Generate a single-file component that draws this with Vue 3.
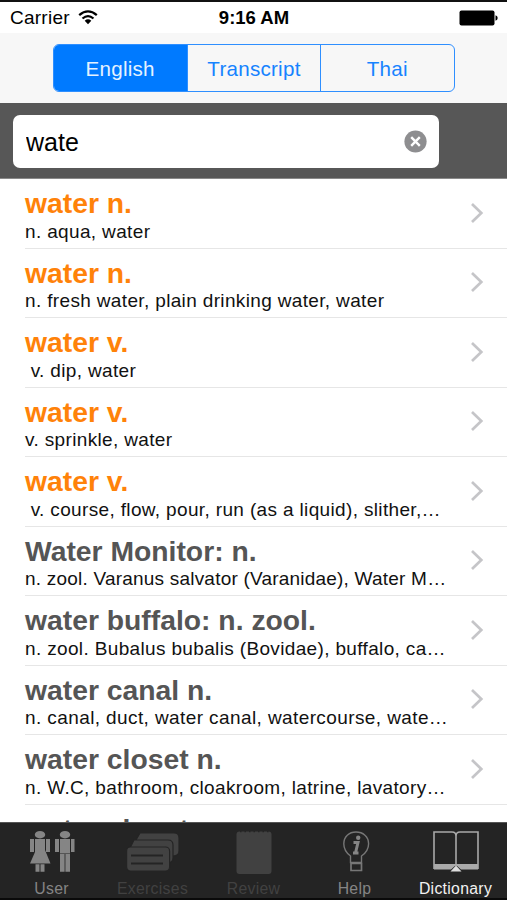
<script setup>
import { ref } from 'vue'

const languages = ['English', 'Transcript', 'Thai']
const active = ref('English')
const query = ref('wate')
const entries = [
  { title: 'water n.', text: 'n. aqua, water', exact: true },
  { title: 'water n.', text: 'n. fresh water, plain drinking water, water', exact: true },
  { title: 'water v.', text: ' v. dip, water', exact: true },
  { title: 'water v.', text: 'v. sprinkle, water', exact: true },
  { title: 'water v.', text: ' v. course, flow, pour, run (as a liquid), slither,…', exact: true },
  { title: 'Water Monitor: n.', text: 'n. zool. Varanus salvator (Varanidae), Water M…', fit: 'tight' },
  { title: 'water buffalo: n. zool.', text: 'n. zool. Bubalus bubalis (Bovidae), buffalo, ca…' },
  { title: 'water canal n.', text: 'n. canal, duct, water canal, watercourse, wate…', fit: 'loose' },
  { title: 'water closet n.', text: 'n. W.C, bathroom, cloakroom, latrine, lavatory…' },
  { title: 'water closet', text: '' },
]
</script>

<template>
  <div class="screen">
    <header class="status">
      <div class="carrier">
        <span>Carrier</span>
        <svg class="wifi" width="20" height="15" viewBox="0 0 20 15">
          <path d="M1.2 5.2Q10-2.4 18.8 5.2M4.5 8.5Q10 3.8 15.5 8.5" fill="none" stroke="#000" stroke-width="2.3" />
          <path d="M6.7 10.7Q10 8 13.3 10.7L10 14.2Z" fill="#000" />
        </svg>
      </div>
      <span class="time">9:16 AM</span>
      <svg class="battery" width="39" height="16" viewBox="0 0 39 16">
        <rect x="0.5" y="0.5" width="35" height="15" rx="2" fill="#000" />
        <path d="M36.5 5.2Q38.7 6 38.7 8T36.5 10.8Z" fill="#000" />
      </svg>
    </header>

    <nav class="segments-bar">
      <div class="segments">
        <button v-for="l in languages" :key="l" :class="{ on: l === active }" @click="active = l">{{ l }}</button>
      </div>
    </nav>

    <div class="search-bar">
      <div class="field">
        <input v-model="query" type="text" aria-label="Search" />
        <svg class="clear" width="23" height="23" viewBox="0 0 23 23" @click="query = ''">
          <circle cx="11.5" cy="11.5" r="11.1" fill="#8e8e90" />
          <path d="M7.2 7.2l8.6 8.6M15.8 7.2l-8.6 8.6" stroke="#fff" stroke-width="2.4" />
        </svg>
      </div>
    </div>

    <main class="list">
      <article v-for="(e, i) in entries" :key="i" class="row">
        <div class="copy">
          <h2 :class="{ exact: e.exact }">{{ e.title }}</h2>
          <p :class="e.fit">{{ e.text }}</p>
        </div>
        <svg class="chevron" width="14" height="22" viewBox="0 0 14 22">
          <path d="M2 2l9.3 9L2 20" fill="none" stroke="#c5c5c8" stroke-width="2.7" />
        </svg>
      </article>
    </main>

    <footer class="tabs">
      <div class="tab">
        <svg width="48" height="44" viewBox="2 0 48 44" fill="#858585">
          <ellipse cx="14" cy="3.7" rx="5.2" ry="3.7" />
          <path d="M9 8h10v11l5.500 13.500H4L9 21ZM4 8h4v13H4ZM20 8h4v13h-4ZM9.500 33.300h4v7.500h-4ZM14.500 33.300h4v7.500h-4Z" />
          <ellipse cx="39" cy="3.7" rx="5.2" ry="3.7" />
          <path d="M34 8h10v14.500H34ZM29 8h4v13h-4ZM45 8h3.500v13H45ZM34 23h4.600v17.800H34ZM39.400 23H44v17.800h-4.600Z" />
        </svg>
        <span>User</span>
      </div>
      <div class="tab disabled">
        <svg width="54" height="44" viewBox="0 0 54 44">
          <g fill="#424242" stroke="#242424" stroke-width="1.2">
            <path d="M14 2h34q5 0 5 5v13q0 5-6 5H17l-7-16Z" />
            <path d="M8 9h34q5 0 5 5v13q0 5-6 5H10L4 17Z" />
            <rect x="0.6" y="16" width="43" height="24" rx="4" />
          </g>
          <path d="M5 24.500h32M5 32.500h32" stroke="#242424" stroke-width="1.8" />
        </svg>
        <span>Exercises</span>
      </div>
      <div class="tab disabled">
        <svg width="36" height="44" viewBox="0 0 36 44">
          <rect x="0.5" y="0.5" width="35" height="42.500" rx="3" fill="#414141" />
          <path d="M4 0.500h30" stroke="#242424" stroke-width="1.5" stroke-dasharray="1.5 3" />
        </svg>
        <span>Review</span>
      </div>
      <div class="tab">
        <svg class="bulb" width="28" height="44" viewBox="0 0 28 44">
          <path d="M8.500 31.500V25Q1.800 20 1.800 12.700C1.800 5.500 7 1 14 1s12.600 4.500 12.600 11.700Q26.600 20 19.500 25v6.500Z" fill="none" stroke="#777" stroke-width="1.4" />
          <path d="M9 32.500h10.500v7H9Z" fill="none" stroke="#777" stroke-width="1.700" />
          <path d="M11.500 11.500h4.500l-2.500 10.500h3M11 22h4" fill="none" stroke="#858585" stroke-width="3" />
          <circle cx="16.200" cy="6.800" r="2.200" fill="#858585" />
        </svg>
        <span>Help</span>
      </div>
      <div class="tab selected">
        <svg width="46" height="44" viewBox="0 0 46 44">
          <path d="M1 33h44v5.500H28L23 34l-5 4.500H1Z" fill="#aaa" />
          <path d="M1 38V1h18q4 0 4 4 0-4 4-4h18v37M23 4v31" fill="none" stroke="#a8a8a8" stroke-width="1.600" />
          <path d="M23 34.500l5.500 6h-11Z" fill="#ddd" />
        </svg>
        <span>Dictionary</span>
      </div>
    </footer>
  </div>
</template>

<style>
body {
  margin: 0;
  background: #fff;
}
</style>

<style scoped>
.screen {
  box-sizing: border-box;
  width: 507px;
  height: 900px;
  overflow: hidden;
  display: flex;
  flex-direction: column;
  border-top: 2px solid #111;
  background: #fff;
  color: #000;
  font-family: "Liberation Sans", Arial, sans-serif;
}
.status {
  height: 31px;
  box-sizing: border-box;
  flex: none;
  display: grid;
  grid-template-columns: 1fr auto 1fr;
  align-items: center;
  padding: 1px 9px 0 10px;
  font-size: 19px;
}
.carrier {
  display: flex;
  align-items: center;
  gap: 8px;
  letter-spacing: 0.25px;
}
.wifi {
  margin-top: -2px;
}
.time {
  font-weight: 700;
  font-size: 18.5px;
}
.battery {
  justify-self: end;
}
.segments-bar {
  height: 70px;
  flex: none;
  display: flex;
  justify-content: center;
  padding-top: 11px;
  box-sizing: border-box;
  background: #f7f7f7;
}
.segments {
  box-sizing: border-box;
  width: 402px;
  height: 48px;
  display: grid;
  grid-template-columns: repeat(3, 1fr);
  border: 1.5px solid #2f8fff;
  border-radius: 6px;
  overflow: hidden;
}
.segments button {
  border: 0;
  padding: 1px 0 0;
  background: none;
  color: #1683ff;
  font: 20.6px "Liberation Sans", Arial, sans-serif;
  letter-spacing: 0.25px;
}
.segments button + button {
  border-left: 1.5px solid #2f8fff;
}
.segments .on {
  background: #007aff;
  color: #e5f2ff;
}
.search-bar {
  box-sizing: border-box;
  height: 76px;
  flex: none;
  padding: 12px 13px;
  background: #575757;
  border-bottom: 1px solid #8a8a8a;
}
.field {
  box-sizing: border-box;
  width: 426px;
  height: 53px;
  display: flex;
  align-items: center;
  padding: 0 12px 1px 13px;
  border-radius: 7px;
  background: #fff;
}
.field input {
  flex: 1;
  min-width: 0;
  border: 0;
  padding: 2px 0 0;
  outline: 0;
  background: none;
  color: #000;
  font: 25px "Liberation Sans", Arial, sans-serif;
}
.list {
  flex: 1;
  min-height: 0;
  overflow: hidden;
}
.row {
  box-sizing: border-box;
  height: 69.55px;
  margin-left: 25px;
  padding-right: 23px;
  display: flex;
  justify-content: space-between;
  border-bottom: 1px solid #e6e6e6;
}
.copy {
  padding-top: 8px;
  white-space: pre;
}
h2 {
  margin: 0;
  font-size: 28.3px;
  line-height: 32px;
  font-weight: 700;
  color: #555;
}
h2.exact {
  color: #ff8209;
}
p {
  margin: 0;
  padding-top: 1.5px;
  font-size: 19px;
  line-height: 22px;
  color: #111;
  letter-spacing: 0.35px;
}
p.tight {
  letter-spacing: 0.21px;
}
p.loose {
  letter-spacing: 0.4px;
}
.chevron {
  flex: none;
  margin-top: 22.5px;
}
.tabs {
  box-sizing: border-box;
  height: 78px;
  flex: none;
  display: grid;
  grid-template-columns: repeat(5, 101px);
  justify-content: center;
  background: #242424;
  border-top: 1px solid #555;
  border-bottom: 2px solid #0a0a0a;
}
.tab {
  display: flex;
  flex-direction: column;
  align-items: center;
  padding-top: 8px;
  color: #858585;
  font-size: 15.8px;
  letter-spacing: 0.3px;
}
.tab svg {
  flex: none;
}
.tab .bulb {
  margin-left: 2px;
}
.tab span {
  margin-top: 5px;
  line-height: 18px;
}
.tab.disabled {
  color: #414141;
}
.tab.selected {
  color: #f2f2f2;
}
</style>
